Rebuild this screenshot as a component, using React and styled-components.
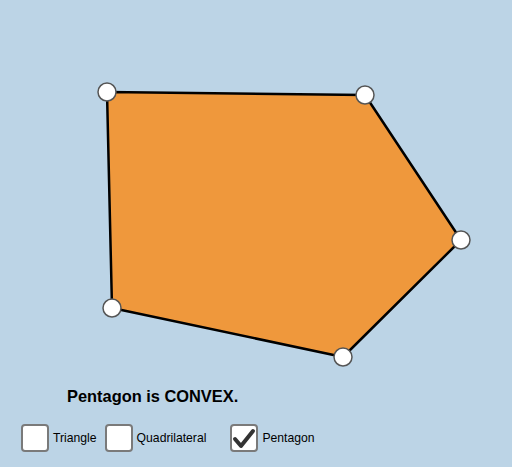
import React from 'react';
import styled, { createGlobalStyle } from 'styled-components';

const GlobalStyle = createGlobalStyle`
    html, body {
        margin: 0;
        padding: 0;
        background: #bcd4e6;
        font-family: "Liberation Sans", Arial, sans-serif;
    }
`

const Page = styled.div`
    width: 512px;
    height: 467px;
    display: flex;
    flex-direction: column;
    overflow: hidden;
`

const Canvas = styled.svg`
    display: block;
    width: 512px;
    height: 386px;
    flex-shrink: 0;
`

const Title = styled.div`
    padding-left: 67px;
    font-size: 16.4px;
    line-height: 20px;
    font-weight: bold;
    color: #000;
`

const Options = styled.div`
    display: flex;
    align-items: center;
    margin-top: 18px;
    padding-left: 21px;
`

const Option = styled.label`
    display: flex;
    align-items: center;
    margin-left: ${p => p.$offset || 0}px;
`

const Box = styled.span`
    box-sizing: border-box;
    width: 28px;
    height: 28px;
    border: 2px solid #7a7a7a;
    border-radius: 4px;
    background: #fff;
    display: flex;
    align-items: center;
    justify-content: center;
`

const Label = styled.span`
    margin-left: 4px;
    font-size: 12.2px;
    line-height: 14px;
    color: #000;
`

const points = [
    [107, 92],
    [365, 95],
    [461, 240],
    [343, 357],
    [112, 308],
]

const options = [
    { name: 'Triangle', offset: 0, checked: false },
    { name: 'Quadrilateral', offset: 8, checked: false },
    { name: 'Pentagon', offset: 24, checked: true },
]

const App = () => {
    return (
        <Page>
            <GlobalStyle />
            <Canvas viewBox="0 0 512 386">
                <polygon
                    points={points.map(p => p.join(',')).join(' ')}
                    fill="#ef983c"
                    stroke="#000"
                    strokeWidth="2.5"
                    strokeLinejoin="round"
                />
                {points.map(([x, y]) => (
                    <circle key={x} cx={x} cy={y} r="9" fill="#fff" stroke="#555" strokeWidth="1.5" />
                ))}
            </Canvas>
            <Title>Pentagon is CONVEX.</Title>
            <Options>
                {options.map(o => (
                    <Option key={o.name} $offset={o.offset}>
                        <Box>
                            {o.checked && (
                                <svg width="24" height="24" viewBox="0 0 24 24">
                                    <path d="M3 13 L9 20 L21 5" fill="none" stroke="#333" strokeWidth="4" strokeLinecap="round" strokeLinejoin="round" />
                                </svg>
                            )}
                        </Box>
                        <Label>{o.name}</Label>
                    </Option>
                ))}
            </Options>
        </Page>
    )
}

export default App;
